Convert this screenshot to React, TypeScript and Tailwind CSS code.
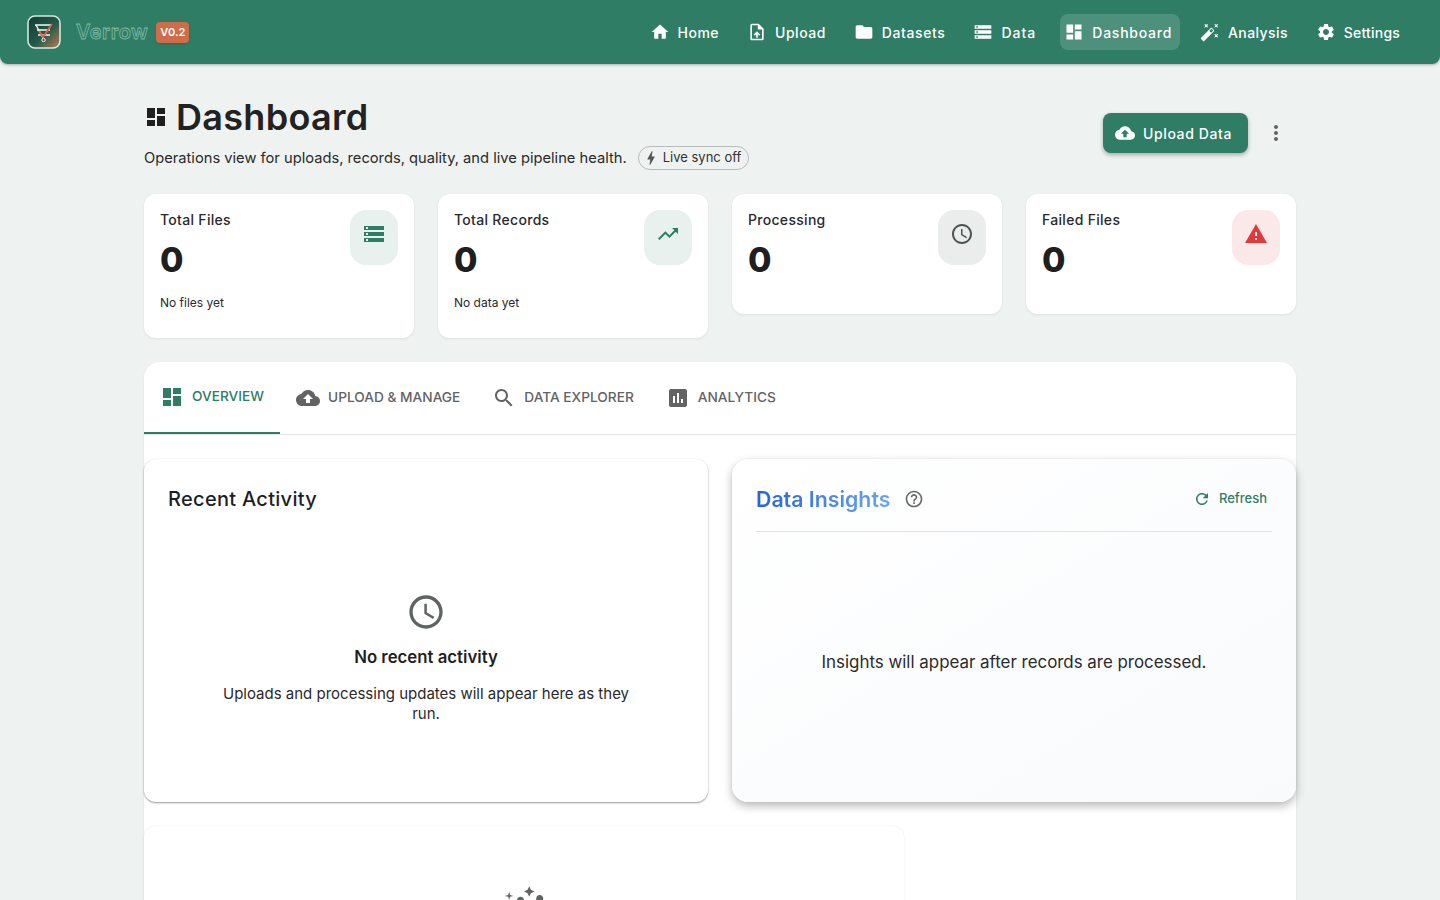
import type { ReactNode } from "react";

const paths = {
  home: "M10 20v-6h4v6h5v-8h3L12 3 2 12h3v8z",
  uploadFile:
    "M14 2H6c-1.1 0-1.99.9-1.99 2L4 20c0 1.1.89 2 1.99 2H18c1.1 0 2-.9 2-2V8l-6-6zm4 18H6V4h7v5h5v11zM8 15.01l1.41 1.41L11 14.84V19h2v-4.16l1.59 1.59L16 15.01 12.01 11 8 15.01z",
  folder: "M10 4H4c-1.1 0-1.99.9-1.99 2L2 18c0 1.1.9 2 2 2h16c1.1 0 2-.9 2-2V8c0-1.1-.9-2-2-2h-8l-2-2z",
  storage:
    "M2 20h20v-4H2v4zm2-3h2v2H4v-2zM2 4v4h20V4H2zm4 3H4V5h2v2zm-4 7h20v-4H2v4zm2-3h2v2H4v-2z",
  dashboard: "M3 13h8V3H3v10zm0 8h8v-6H3v6zm10 0h8V11h-8v10zm0-18v6h8V3h-8z",
  wand: "M7.5 5.6L10 7 8.6 4.5 10 2 7.5 3.4 5 2l1.4 2.5L5 7zm12 9.8L17 14l1.4 2.5L17 19l2.5-1.4L22 19l-1.4-2.5L22 14zM22 2l-2.5 1.4L17 2l1.4 2.5L17 7l2.5-1.4L22 7l-1.4-2.5zm-7.63 5.29c-.39-.39-1.02-.39-1.41 0L1.29 18.96c-.39.39-.39 1.02 0 1.41l2.34 2.34c.39.39 1.02.39 1.41 0L16.7 11.05c.39-.39.39-1.02 0-1.41l-2.33-2.35zm-1.03 5.49l-2.12-2.12 2.44-2.44 2.12 2.12-2.44 2.44z",
  settings:
    "M19.14 12.94c.04-.3.06-.61.06-.94 0-.32-.02-.64-.07-.94l2.03-1.58c.18-.14.23-.41.12-.61l-1.92-3.32c-.12-.22-.37-.29-.59-.22l-2.39.96c-.5-.38-1.03-.7-1.62-.94l-.36-2.54c-.04-.24-.24-.41-.48-.41h-3.84c-.24 0-.43.17-.47.41l-.36 2.54c-.59.24-1.13.57-1.62.94l-2.39-.96c-.22-.08-.47 0-.59.22L2.74 8.87c-.12.21-.08.47.12.61l2.03 1.58c-.05.3-.09.63-.09.94s.02.64.07.94l-2.03 1.58c-.18.14-.23.41-.12.61l1.92 3.32c.12.22.37.29.59.22l2.39-.96c.5.38 1.03.7 1.62.94l.36 2.54c.05.24.24.41.48.41h3.84c.24 0 .44-.17.47-.41l.36-2.54c.59-.24 1.13-.56 1.62-.94l2.39.96c.22.08.47 0 .59-.22l1.92-3.32c.12-.22.07-.47-.12-.61l-2.01-1.58zM12 15.6c-1.98 0-3.6-1.62-3.6-3.6s1.62-3.6 3.6-3.6 3.6 1.62 3.6 3.6-1.62 3.6-3.6 3.6z",
  cloud:
    "M19.35 10.04C18.67 6.59 15.64 4 12 4 9.11 4 6.6 5.64 5.35 8.04 2.34 8.36 0 10.91 0 14c0 3.31 2.69 6 6 6h13c2.76 0 5-2.24 5-5 0-2.64-2.05-4.78-4.65-4.96zM14 13v4h-4v-4H7l5-5 5 5h-3z",
  more: "M12 8c1.1 0 2-.9 2-2s-.9-2-2-2-2 .9-2 2 .9 2 2 2zm0 2c-1.1 0-2 .9-2 2s.9 2 2 2 2-.9 2-2-.9-2-2-2zm0 6c-1.1 0-2 .9-2 2s.9 2 2 2 2-.9 2-2-.9-2-2-2z",
  trending: "M16 6l2.29 2.29-4.88 4.88-4-4L2 16.59 3.41 18l6-6 4 4 6.3-6.29L22 12V6z",
  clock:
    "M11.99 2C6.47 2 2 6.48 2 12s4.47 10 9.99 10C17.52 22 22 17.52 22 12S17.52 2 11.99 2zM12 20c-4.42 0-8-3.58-8-8s3.58-8 8-8 8 3.58 8 8-3.58 8-8 8zm.5-13H11v6l5.25 3.15.75-1.23-4.5-2.67z",
  warning: "M1 21h22L12 2 1 21zm12-3h-2v-2h2v2zm0-4h-2v-4h2v4z",
  search:
    "M15.5 14h-.79l-.28-.27C15.41 12.59 16 11.11 16 9.5 16 5.91 13.09 3 9.5 3S3 5.91 3 9.5 5.91 16 9.5 16c1.61 0 3.09-.59 4.23-1.57l.27.28v.79l5 4.99L20.49 19l-4.99-5zm-6 0C7.01 14 5 11.99 5 9.5S7.01 5 9.5 5 14 7.01 14 9.5 11.99 14 9.5 14z",
  assessment:
    "M19 3H5c-1.1 0-2 .9-2 2v14c0 1.1.9 2 2 2h14c1.1 0 2-.9 2-2V5c0-1.1-.9-2-2-2zM9 17H7v-7h2v7zm4 0h-2V7h2v10zm4 0h-2v-4h2v4z",
  help: "M11 18h2v-2h-2v2zm1-16C6.48 2 2 6.48 2 12s4.48 10 10 10 10-4.48 10-10S17.52 2 12 2zm0 18c-4.41 0-8-3.59-8-8s3.59-8 8-8 8 3.59 8 8-3.59 8-8 8zm0-14c-2.21 0-4 1.79-4 4h2c0-1.1.9-2 2-2s2 .9 2 2c0 2-3 1.75-3 5h2c0-2.25 3-2.5 3-5 0-2.21-1.79-4-4-4z",
  refresh:
    "M17.65 6.35C16.2 4.9 14.21 4 12 4c-4.42 0-7.99 3.58-7.99 8s3.57 8 7.99 8c3.73 0 6.84-2.55 7.73-6h-2.08c-.82 2.33-3.04 4-5.65 4-3.31 0-6-2.69-6-6s2.69-6 6-6c1.66 0 3.14.69 4.22 1.78L13 11h7V4l-2.35 2.35z",
  bolt: "M11 21h-1l1-7H7.5c-.58 0-.57-.32-.38-.66.19-.34.05-.08.07-.12C8.48 10.94 10.42 7.54 13 3h1l-1 7h3.5c.49 0 .56.33.47.51l-.07.15C12.96 17.55 11 21 11 21z",
  insights:
    "M21 8c-1.45 0-2.26 1.44-1.93 2.51l-3.55 3.56c-.3-.09-.74-.09-1.04 0l-2.55-2.55C12.27 10.45 11.46 9 10 9c-1.45 0-2.27 1.44-1.93 2.52l-4.56 4.55C2.44 15.74 1 16.55 1 18c0 1.1.9 2 2 2 1.45 0 2.26-1.44 1.93-2.51l4.55-4.56c.3.09.74.09 1.04 0l2.55 2.55C12.73 16.55 13.54 18 15 18c1.45 0 2.27-1.44 1.93-2.52l3.56-3.55c1.07.33 2.51-.48 2.51-1.93 0-1.1-.9-2-2-2zM15 9l.94-2.07L18 6l-2.06-.93L15 3l-.92 2.07L12 6l2.08.93zM3.5 11L4 9l2-.5L4 8l-.5-2L3 8l-2 .5L3 9z",
};

type IconName = keyof typeof paths;

function Icon({ name, className }: { name: IconName; className?: string }) {
  return (
    <svg viewBox="0 0 24 24" fill="currentColor" className={className}>
      <path d={paths[name]} />
    </svg>
  );
}

function Logo() {
  return (
    <svg viewBox="0 0 34 34" className="size-[34px] shrink-0">
      <defs>
        <linearGradient id="logoBg" x1="0" y1="0" x2="1" y2="1">
          <stop offset="0" stopColor="#0f3d33" />
          <stop offset="0.55" stopColor="#24594a" />
          <stop offset="1" stopColor="#c07a52" />
        </linearGradient>
      </defs>
      <rect x="1" y="1" width="32" height="32" rx="7" fill="url(#logoBg)" stroke="#d5e6df" strokeWidth="1.6" />
      <path d="M8 10h17M10 15h13M11 20h12" stroke="#f3f7f5" strokeWidth="1.4" fill="none" />
      <path d="M9 10l7 13" stroke="#f3f7f5" strokeWidth="1.4" fill="none" />
      <path d="M12 16l4 6 9-13" stroke="#e0604a" strokeWidth="1.9" fill="none" />
      <circle cx="16.5" cy="25" r="1.7" fill="none" stroke="#f3f7f5" strokeWidth="1" />
    </svg>
  );
}

const navItems: { label: string; icon: IconName; tracking: string; active?: boolean }[] = [
  { label: "Home", icon: "home", tracking: "tracking-[0.5px]" },
  { label: "Upload", icon: "uploadFile", tracking: "tracking-[0.5px]" },
  { label: "Datasets", icon: "folder", tracking: "tracking-[0.6px]" },
  { label: "Data", icon: "storage", tracking: "tracking-[1px]" },
  { label: "Dashboard", icon: "dashboard", tracking: "tracking-[0.75px]", active: true },
  { label: "Analysis", icon: "wand", tracking: "tracking-[0.4px]" },
  { label: "Settings", icon: "settings", tracking: "tracking-[0.2px]" },
];

function TopBar() {
  return (
    <header className="flex h-16 shrink-0 items-center justify-between rounded-b-lg bg-[#2e7d64] pl-[27px] pr-8 shadow-[0_1px_3px_rgba(0,0,0,0.3)]">
      <div className="flex items-center">
        <Logo />
        <span className="ml-[15px] text-[20px] font-semibold tracking-[0.45px] text-transparent [-webkit-text-stroke:0.8px_#7fbaa6]">
          Verrow
        </span>
        <span className="ml-2 flex h-[21px] items-center rounded bg-[#cf6d4b] px-1 text-[11px] font-semibold text-white shadow-sm">
          V0.2
        </span>
      </div>
      <nav className="flex items-center gap-4">
        {navItems.map((item) => (
          <div
            key={item.label}
            className={
              item.active
                ? "flex h-9 items-center gap-2 rounded-lg bg-white/15 pl-1 pr-2 text-white"
                : "flex h-9 items-center gap-2 rounded-lg pl-1 pr-2 text-white"
            }
          >
            <Icon name={item.icon} className="size-5" />
            <span className={`text-[14px] font-medium ${item.tracking}`}>{item.label}</span>
          </div>
        ))}
      </nav>
    </header>
  );
}

function StatCard({
  label,
  caption,
  icon,
  tile,
  tint,
}: {
  label: string;
  caption?: string;
  icon: IconName;
  tile: string;
  tint: string;
}) {
  return (
    <div className="flex items-start justify-between rounded-xl bg-white p-4 shadow-[0_1px_3px_rgba(0,0,0,0.07)]">
      <div>
        <div className="text-[14px] font-medium leading-5 tracking-[0.3px] text-[#2a2a2a]">{label}</div>
        <div className="mt-2 text-[34px] font-extrabold leading-[44px] text-[#1f1f1f]">0</div>
        {caption ? (
          <div className="mt-[11px] mb-[9px] text-[12px] leading-5 text-[#2a2a2a]">{caption}</div>
        ) : (
          <div className="h-4" />
        )}
      </div>
      <div className={`flex h-[55px] w-12 justify-center rounded-2xl pt-3 ${tile} ${tint}`}>
        <Icon name={icon} className="size-6" />
      </div>
    </div>
  );
}

function Tab({ label, icon, active }: { label: string; icon: IconName; active?: boolean }) {
  return (
    <div
      className={
        active
          ? "flex h-[72px] items-center gap-2 border-b-2 border-[#2e7d64] px-4 text-[#2e7d64]"
          : "flex h-[72px] items-center gap-2 px-4 text-[#636363]"
      }
    >
      <Icon name={icon} className="size-6" />
      <span className="-mt-px text-[13.7px] font-medium">{label}</span>
    </div>
  );
}

function RecentActivity({ children }: { children: ReactNode }) {
  return (
    <div className="flex h-[343px] flex-col rounded-xl bg-white p-6 shadow-[0_1px_2px_rgba(0,0,0,0.4),0_0_2px_rgba(0,0,0,0.04)]">
      <h2 className="text-[20px] font-medium leading-[32px] tracking-[0.3px] text-[#1f1f1f]">Recent Activity</h2>
      {children}
    </div>
  );
}

export default function App() {
  return (
    <div className="flex h-screen flex-col overflow-hidden bg-[#eef2f1] font-['Inter','Liberation_Sans',sans-serif] text-[#1f1f1f]">
      <TopBar />
      <main className="mx-auto w-[1152px] pt-8">
        <div className="flex items-start justify-between">
          <div>
            <div className="flex items-center gap-2">
              <Icon name="dashboard" className="size-6 text-[#1f1f1f]" />
              <h1 className="text-[36px] font-semibold leading-[42px] tracking-[0.3px] text-[#222]">Dashboard</h1>
            </div>
            <div className="mt-2 flex items-center gap-[11px]">
              <p className="text-[14.7px] leading-6 text-[#2a2a2a]">
                Operations view for uploads, records, quality, and live pipeline health.
              </p>
              <span className="flex h-6 items-center gap-[3px] rounded-full border border-[#b8bdbb] pl-[3px] pr-[7px] text-[13px] text-[#333]">
                <Icon name="bolt" className="size-[18px] text-[#555]" />
                Live sync off
              </span>
            </div>
          </div>
          <div className="mt-[17px] flex items-center gap-2">
            <button className="flex h-10 items-center gap-2 rounded-lg bg-[#2e7d64] pl-3 pr-4 text-[14px] font-medium tracking-[0.6px] text-white shadow-[0_2px_4px_rgba(0,0,0,0.3)]">
              <Icon name="cloud" className="size-5" />
              Upload Data
            </button>
            <div className="flex size-10 items-center justify-center text-[#636363]">
              <Icon name="more" className="size-6" />
            </div>
          </div>
        </div>

        <div className="mt-6 grid grid-cols-4 items-start gap-6">
          <StatCard label="Total Files" caption="No files yet" icon="storage" tile="bg-[#e8f1ee]" tint="text-[#2e7d64]" />
          <StatCard label="Total Records" caption="No data yet" icon="trending" tile="bg-[#e8f1ee]" tint="text-[#2e7d64]" />
          <StatCard label="Processing" icon="clock" tile="bg-[#ebeded]" tint="text-[#4a5553]" />
          <StatCard label="Failed Files" icon="warning" tile="bg-[#fbe9e9]" tint="text-[#e03a3e]" />
        </div>

        <section className="mt-6 rounded-t-2xl bg-white shadow-[0_1px_3px_rgba(0,0,0,0.07)]">
          <div className="flex border-b border-[#e2e5e4]">
            <Tab label="OVERVIEW" icon="dashboard" active />
            <Tab label="UPLOAD & MANAGE" icon="cloud" />
            <Tab label="DATA EXPLORER" icon="search" />
            <Tab label="ANALYTICS" icon="assessment" />
          </div>

          <div className="mt-6 grid grid-cols-2 gap-6">
            <RecentActivity>
              <div className="flex flex-1 flex-col items-center pt-[77px] text-center">
                <Icon name="clock" className="size-10 text-[#5f6362]" />
                <div className="mt-[13px] text-[16.8px] font-semibold leading-6">No recent activity</div>
                <p className="mt-[15px] w-[420px] text-[15px] leading-5 text-[#2a2a2a]">
                  Uploads and processing updates will appear here as they run.
                </p>
              </div>
            </RecentActivity>

            <div className="flex h-[343px] flex-col rounded-2xl bg-linear-to-br from-white to-[#f8fafc] px-6 pt-6 shadow-[0_4px_10px_rgba(0,0,0,0.28),0_0_2px_rgba(0,0,0,0.08)]">
              <div className="flex h-[49px] items-start justify-between border-b border-[#dfe3e8] pb-4">
                <div className="flex items-center gap-[14px]">
                  <h2 className="bg-linear-to-r from-[#2563d9] to-[#6aa5ee] bg-clip-text text-[21.3px] font-semibold leading-8 text-transparent">
                    Data Insights
                  </h2>
                  <Icon name="help" className="size-5 text-[#6b6b6b]" />
                </div>
                <div className="mr-[5px] flex h-[31px] items-center gap-2 text-[#2e7d64]">
                  <Icon name="refresh" className="size-[18px]" />
                  <span className="text-[13px] font-medium">Refresh</span>
                </div>
              </div>
              <div className="flex flex-1 items-center justify-center pb-[8px] text-[16.9px] text-[#2a2a2a]">
                Insights will appear after records are processed.
              </div>
            </div>
          </div>

          <div className="mt-6 h-[200px] w-[760px] rounded-xl bg-white pt-[55px] shadow-[0_0_2px_rgba(0,0,0,0.1)]">
            <Icon name="insights" className="mx-auto size-[42px] text-[#5f6362]" />
          </div>
        </section>
      </main>
    </div>
  );
}
